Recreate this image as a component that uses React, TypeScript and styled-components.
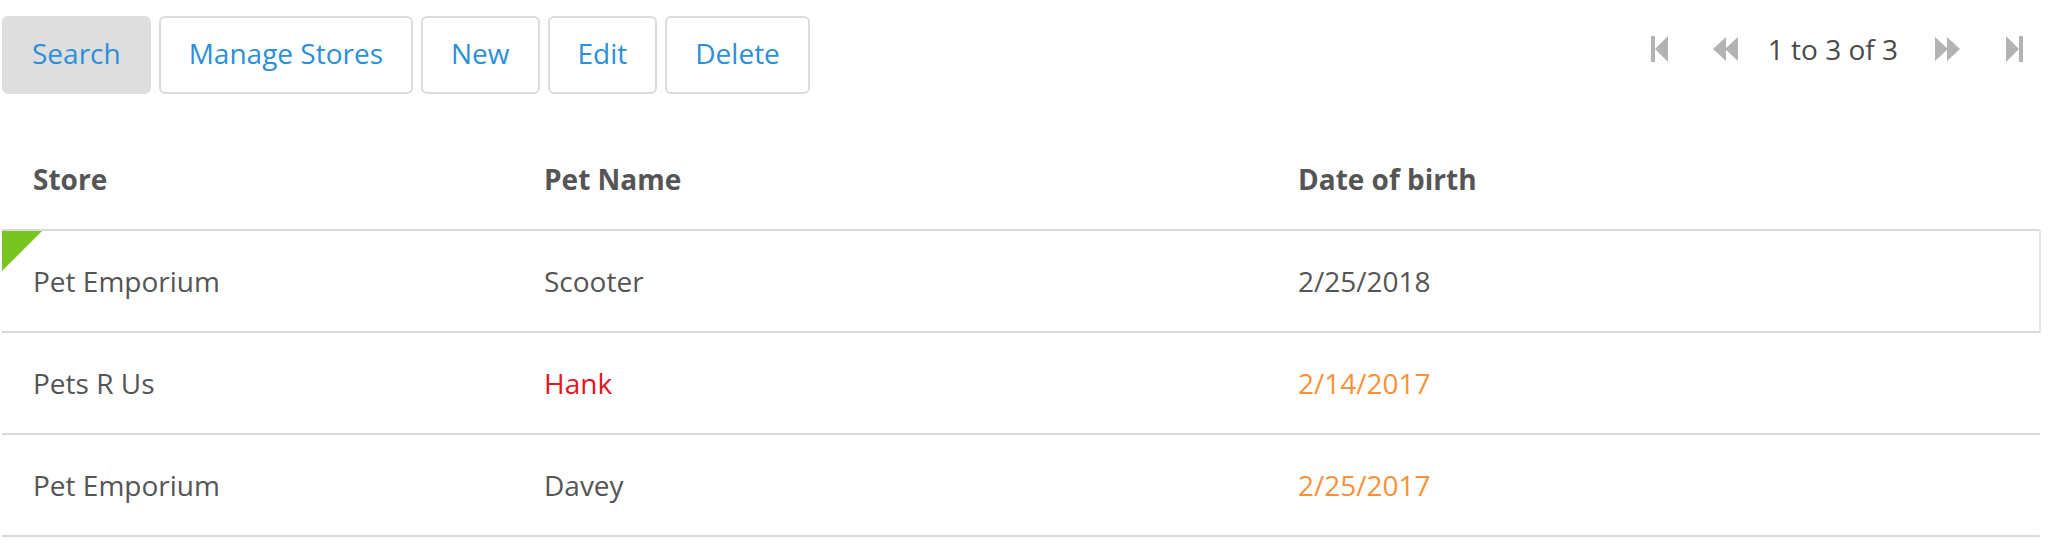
import React from "react";
import styled, { createGlobalStyle } from "styled-components";

const GlobalStyle = createGlobalStyle`
  html, body {
    margin: 0;
    padding: 0;
    background: #ffffff;
  }
  body {
    font-family: "Open Sans", "Liberation Sans", sans-serif;
    color: #555555;
  }
`;

const Page = styled.div`
  width: 2050px;
  display: flex;
  flex-direction: column;
`;

const Toolbar = styled.div`
  display: flex;
  justify-content: space-between;
  align-items: flex-start;
  padding: 16px 26px 0 2px;
  height: 112px;
  box-sizing: border-box;
`;

const ButtonGroup = styled.div`
  display: flex;
  gap: 8px;
`;

const ToolButton = styled.button<{ $active?: boolean }>`
  height: 78px;
  box-sizing: border-box;
  padding: 0 28px 4px;
  border: 2px solid ${(p) => (p.$active ? "#dedede" : "#dcdcdc")};
  border-radius: 6px;
  background: ${(p) => (p.$active ? "#dedede" : "#ffffff")};
  color: #2b8fda;
  font-family: "Open Sans", "Liberation Sans", sans-serif;
  font-size: 28px;
  line-height: 1;
  cursor: pointer;
`;

const Pager = styled.div`
  display: flex;
  align-items: center;
  margin-top: 20px;
  height: 26px;
`;

const PagerIcon = styled.svg<{ $gapAfter: number }>`
  display: block;
  fill: #b3b3b3;
  margin-right: ${(p) => p.$gapAfter}px;
`;

const PagerText = styled.span`
  font-size: 28px;
  color: #4a4a4a;
  line-height: 26px;
  margin-right: 36px;
  white-space: nowrap;
`;

const Table = styled.div`
  margin: 0 9px 0 2px;
  display: flex;
  flex-direction: column;
`;

const Row = styled.div<{ $header?: boolean; $focused?: boolean }>`
  position: relative;
  display: grid;
  grid-template-columns: 511px 754px 1fr;
  align-items: center;
  height: ${(p) => (p.$header ? 119 : 102)}px;
  padding-top: ${(p) => (p.$header ? 16 : 0)}px;
  box-sizing: border-box;
  border-bottom: 2px solid #d9d9d9;
  border-right: 2px solid ${(p) => (p.$focused ? "#e4e4e4" : "transparent")};
`;

const Cell = styled.div<{ $tone?: "default" | "red" | "orange"; $bold?: boolean }>`
  padding-left: 31px;
  font-size: 28px;
  font-weight: ${(p) => (p.$bold ? 700 : 400)};
  color: ${(p) =>
    p.$tone === "red" ? "#e8141f" : p.$tone === "orange" ? "#f79238" : "#555555"};
  white-space: nowrap;
`;

const Marker = styled.span`
  position: absolute;
  top: 0;
  left: 0;
  width: 40px;
  height: 40px;
  background: #79c520;
  clip-path: polygon(0 0, 100% 0, 0 100%);
`;

type Tone = "default" | "red" | "orange";

const rows: { store: string; pet: string; petTone: Tone; dob: string; dobTone: Tone }[] = [
  { store: "Pet Emporium", pet: "Scooter", petTone: "default", dob: "2/25/2018", dobTone: "default" },
  { store: "Pets R Us", pet: "Hank", petTone: "red", dob: "2/14/2017", dobTone: "orange" },
  { store: "Pet Emporium", pet: "Davey", petTone: "default", dob: "2/25/2017", dobTone: "orange" },
];

export default function App() {
  return (
    <>
      <GlobalStyle />
      <Page>
        <Toolbar>
          <ButtonGroup>
            <ToolButton $active>Search</ToolButton>
            <ToolButton>Manage Stores</ToolButton>
            <ToolButton>New</ToolButton>
            <ToolButton>Edit</ToolButton>
            <ToolButton>Delete</ToolButton>
          </ButtonGroup>
          <Pager>
            <PagerIcon $gapAfter={44} width="18" height="26" viewBox="0 0 18 26">
              <rect x="0" y="0" width="4" height="26" />
              <polygon points="4,13 17,0 17,26" />
            </PagerIcon>
            <PagerIcon $gapAfter={29} width="26" height="26" viewBox="0 0 26 26">
              <polygon points="0,13 13,1 13,25" />
              <polygon points="12,13 25,1 25,25" />
            </PagerIcon>
            <PagerText>1 to 3 of 3</PagerText>
            <PagerIcon $gapAfter={46} width="26" height="26" viewBox="0 0 26 26">
              <polygon points="1,1 14,13 1,25" />
              <polygon points="13,1 26,13 13,25" />
            </PagerIcon>
            <PagerIcon $gapAfter={0} width="18" height="26" viewBox="0 0 18 26">
              <polygon points="0,0 13,13 0,26" />
              <rect x="13" y="0" width="4" height="26" />
            </PagerIcon>
          </Pager>
        </Toolbar>
        <Table>
          <Row $header>
            <Cell $bold>Store</Cell>
            <Cell $bold>Pet Name</Cell>
            <Cell $bold>Date of birth</Cell>
          </Row>
          {rows.map((r, i) => (
            <Row key={i} $focused={i === 0}>
              {i === 0 && <Marker />}
              <Cell>{r.store}</Cell>
              <Cell $tone={r.petTone}>{r.pet}</Cell>
              <Cell $tone={r.dobTone}>{r.dob}</Cell>
            </Row>
          ))}
        </Table>
      </Page>
    </>
  );
}
